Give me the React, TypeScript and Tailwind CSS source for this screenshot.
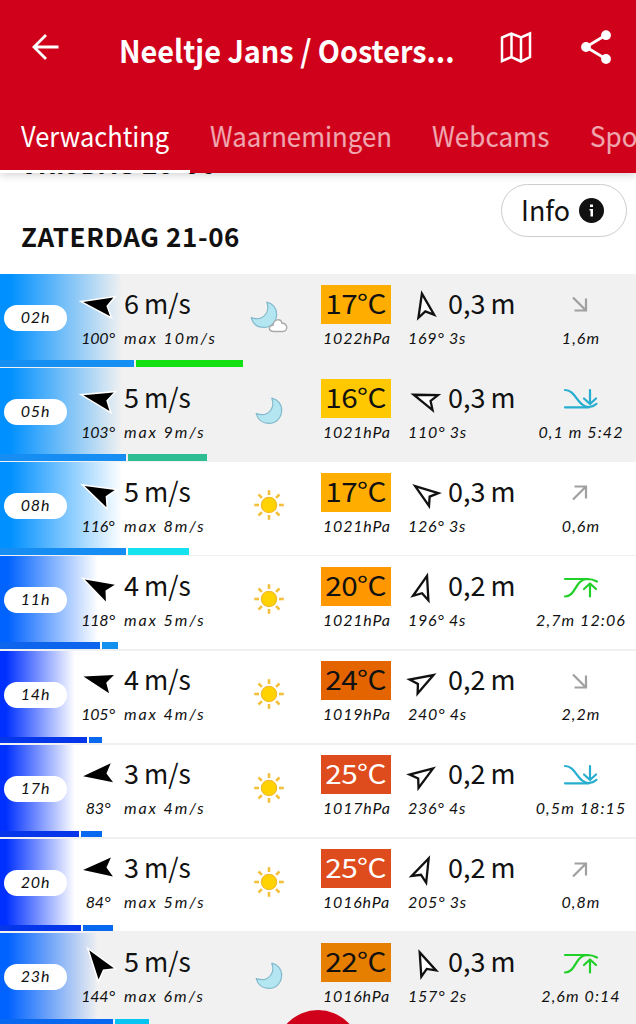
import { clsx } from "clsx"

type Weather = "moon" | "moon-cloud" | "sun"
type Tide = "falling" | "rising" | "low" | "high"

interface Forecast {
  hour: string
  night?: boolean
  glow: string
  windDir: number
  wind: number
  gust: number
  windBar: { width: number; color: string }
  gustBar: { width: number; color: string }
  weather: Weather
  temp: number
  tempColor: string
  pressure: number
  waveDir: number
  wave: string
  period: number
  tide: Tide
  tideText: string
}

const BLUE = "w-[122px] from-[#0090ff] from-8% to-[#0090ff]/0"
const MID = "w-[98px] from-[#0062ff] from-8% to-[#0062ff]/0"
const DEEP = "w-[75px] from-[#0030ff] from-8% to-[#0030ff]/0"

const forecasts: Forecast[] = [
  {
    hour: "02", night: true, glow: BLUE, windDir: 100, wind: 6, gust: 10,
    windBar: { width: 134, color: "#1590f2" }, gustBar: { width: 107, color: "#12e010" },
    weather: "moon-cloud", temp: 17, tempColor: "bg-[#ffae00]", pressure: 1022,
    waveDir: 169, wave: "0,3", period: 3, tide: "falling", tideText: "1,6m",
  },
  {
    hour: "05", night: true, glow: BLUE, windDir: 103, wind: 5, gust: 9,
    windBar: { width: 126, color: "#158df2" }, gustBar: { width: 79, color: "#2cbd92" },
    weather: "moon", temp: 16, tempColor: "bg-[#ffc800]", pressure: 1021,
    waveDir: 110, wave: "0,3", period: 3, tide: "low", tideText: "0,1 m 5:42",
  },
  {
    hour: "08", glow: BLUE, windDir: 116, wind: 5, gust: 8,
    windBar: { width: 126, color: "#158df2" }, gustBar: { width: 61, color: "#14e2ee" },
    weather: "sun", temp: 17, tempColor: "bg-[#ffae00]", pressure: 1021,
    waveDir: 126, wave: "0,3", period: 3, tide: "rising", tideText: "0,6m",
  },
  {
    hour: "11", glow: MID, windDir: 118, wind: 4, gust: 5,
    windBar: { width: 100, color: "#0d65ee" }, gustBar: { width: 16, color: "#1291ee" },
    weather: "sun", temp: 20, tempColor: "bg-[#ff9700]", pressure: 1021,
    waveDir: 196, wave: "0,2", period: 4, tide: "high", tideText: "2,7m 12:06",
  },
  {
    hour: "14", glow: DEEP, windDir: 105, wind: 4, gust: 4,
    windBar: { width: 86.5, color: "#0636ea" }, gustBar: { width: 13, color: "#0868f0" },
    weather: "sun", temp: 24, tempColor: "bg-[#e46500]", pressure: 1019,
    waveDir: 240, wave: "0,2", period: 4, tide: "falling", tideText: "2,2m",
  },
  {
    hour: "17", glow: DEEP, windDir: 83, wind: 3, gust: 4,
    windBar: { width: 79, color: "#0636ea" }, gustBar: { width: 21, color: "#0868f0" },
    weather: "sun", temp: 25, tempColor: "bg-[#de4b1d]", pressure: 1017,
    waveDir: 236, wave: "0,2", period: 4, tide: "low", tideText: "0,5m 18:15",
  },
  {
    hour: "20", glow: DEEP, windDir: 84, wind: 3, gust: 5,
    windBar: { width: 81, color: "#0636ea" }, gustBar: { width: 29.5, color: "#0868f0" },
    weather: "sun", temp: 25, tempColor: "bg-[#de4b1d]", pressure: 1016,
    waveDir: 205, wave: "0,2", period: 3, tide: "rising", tideText: "0,8m",
  },
  {
    hour: "23", night: true, glow: MID, windDir: 144, wind: 5, gust: 6,
    windBar: { width: 113, color: "#0868f0" }, gustBar: { width: 33.5, color: "#08c4f2" },
    weather: "moon", temp: 22, tempColor: "bg-[#e67e00]", pressure: 1016,
    waveDir: 157, wave: "0,3", period: 2, tide: "high", tideText: "2,6m 0:14",
  },
]

function WindArrow({ deg }: { deg: number }) {
  return (
    <svg width="46" height="39" viewBox="-23 -19.5 46 39" className="overflow-visible">
      <path
        d="M0 -15 L9.5 14 L0 8.5 L-9.5 14 Z"
        transform={`rotate(${deg + 180})`}
        fill="#000"
        stroke="#fff"
        strokeWidth="3"
        paintOrder="stroke"
      />
    </svg>
  )
}

function WaveArrow({ deg }: { deg: number }) {
  return (
    <svg width="34" height="39" viewBox="-17 -19.5 34 39" className="overflow-visible">
      <path
        d="M0 -11 L8 12 L0 7 L-8 12 Z"
        transform={`rotate(${deg + 180})`}
        fill="#fff"
        stroke="#111"
        strokeWidth="2.3"
        strokeMiterlimit="10"
      />
    </svg>
  )
}

function WeatherIcon({ type }: { type: Weather }) {
  if (type === "sun") {
    return (
      <svg width="40" height="40" viewBox="-20 -20 40 40">
        {[0, 45, 90, 135, 180, 225, 270, 315].map((a) => (
          <path key={a} d="M0 -14.8 V-10" transform={`rotate(${a})`} stroke="#f3c03c" strokeWidth="2.6" />
        ))}
        <circle r="7.7" fill="#ffd200" stroke="#f2bc30" strokeWidth="1.2" />
      </svg>
    )
  }
  const cloudy = type === "moon-cloud"
  return (
    <svg width="40" height="40" viewBox="-20 -20 40 40">
      <path
        d="M2.8 -12.8 C9 -11.5 13 -6.5 12.6 0 C12.2 7 7 12.4 0 12.4 C-6 12.4 -11 9 -12.8 2.6 C-6 5 -1 3 1.8 -1 C4.3 -4.5 4.3 -8.8 2.8 -12.8 Z"
        transform={cloudy ? "translate(-5 -2)" : undefined}
        fill="#b4e6f2"
        stroke="#82b9cc"
        strokeWidth="1.2"
        strokeLinejoin="round"
      />
      {cloudy && (
        <path
          d="M5 14.5 C-1 14.5 -1 8.3 4 8.3 C4.5 1.8 12 1 13 6.3 C19 5.8 19.3 14.5 13.8 14.5 Z"
          fill="#fff"
          stroke="#aaa"
          strokeWidth="1.4"
        />
      )}
    </svg>
  )
}

function TideIcon({ type }: { type: Tide }) {
  if (type === "low") {
    return (
      <svg width="36" height="24" viewBox="0 0 36 24" className="mt-px" fill="none" stroke="#27add0" strokeWidth="2.2" strokeLinecap="round" strokeLinejoin="round">
        <path d="M2 3 C13 3 14 19 25 20 C28.5 20 31.5 18.7 33.5 16.8" />
        <path d="M2 20.3 H26" />
        <path d="M27 3 V17 M21 11.5 L27 17 L33 11.5" />
      </svg>
    )
  }
  if (type === "high") {
    return (
      <svg width="36" height="24" viewBox="0 0 36 24" className="mt-[3px]" fill="none" stroke="#20cf28" strokeWidth="2.2" strokeLinecap="round" strokeLinejoin="round">
        <path d="M2 20.5 C13 20.5 12 3.6 24 3 C28 3 31.5 4 34 5.5" />
        <path d="M2 3 H25" />
        <path d="M27 20.5 V8 M21 13 L27 7.5 L33 13" />
      </svg>
    )
  }
  return (
    <svg width="36" height="24" viewBox="0 0 36 24" fill="none" stroke="#a0a0a0" strokeWidth="2.2">
      {type === "falling" ? (
        <path d="M10 5.5 L22.5 18 M23 6.5 V18.5 H11.5" />
      ) : (
        <path d="M10 19.5 L22.5 7 M11.5 6.5 H23 V18.5" />
      )}
    </svg>
  )
}

const big = "font-['Noto_Sans_CJK_JP',sans-serif] text-[27px] leading-[36px] h-[39px] whitespace-nowrap text-[#111]"
const small = "font-['Lato',sans-serif] italic text-[16px] leading-5 h-5 mt-[4px] whitespace-nowrap text-[#111]"

function ForecastRow({ item }: { item: Forecast }) {
  return (
    <div className={clsx("relative h-[94.15px] overflow-hidden", item.night ? "bg-[#f1f1f1]" : "bg-white")}>
      <div className={clsx("absolute left-0 top-0 h-full bg-linear-to-r/srgb", item.glow)} />
      <div className="relative flex h-[86px] pt-[10.5px]">
        <div className="ml-1 mr-2 mt-[20.5px] h-[26px] w-[63px] rounded-full bg-white text-center font-['Lato',sans-serif] text-[16px] italic leading-[23px] tracking-[0.8px] text-[#111]">
          {item.hour}h
        </div>
        <div className="flex w-[46px] flex-col items-center">
          <WindArrow deg={item.windDir} />
          <div className={clsx(small, "tracking-[-0.2px]")}>{item.windDir}°</div>
        </div>
        <div className="ml-[3px] w-[125px]">
          <div className={big}>
            {item.wind}
            <span className="ml-[5px] inline-block origin-left scale-x-97">m/s</span>
          </div>
          <div className={clsx(small, "tracking-[1.9px]")}>max {item.gust}m/s</div>
        </div>
        <div className="mt-[12.5px] h-10 w-10">
          <WeatherIcon type={item.weather} />
        </div>
        <div className="ml-[32px] w-[70px]">
          <div className={clsx(big, "text-center", item.tempColor, item.temp >= 25 && "text-white!")}>
            <span className="inline-block scale-x-110 tracking-[-0.5px]">{item.temp}°C</span>
          </div>
          <div className={clsx(small, "pl-[2px] tracking-[0.8px]")}>{item.pressure}hPa</div>
        </div>
        <div className="ml-4 w-[119px]">
          <div className="flex">
            <WaveArrow deg={item.waveDir} />
            <div className={clsx(big, "ml-[7px]")}>
              {item.wave}
              <span className="ml-[5px]">m</span>
            </div>
          </div>
          <div className={clsx(small, "pl-px tracking-[0.7px]")}>
            {item.waveDir}° {item.period}s
          </div>
        </div>
        <div className="flex w-[110px] flex-col items-center">
          <div className="flex h-[39px] items-center">
            <TideIcon type={item.tide} />
          </div>
          <div className={clsx(small, "tracking-[1.1px]")}>{item.tideText}</div>
        </div>
      </div>
      <div className="relative flex h-[6.5px] gap-[2px]">
        <div style={{ width: item.windBar.width, backgroundColor: item.windBar.color }} />
        <div style={{ width: item.gustBar.width, backgroundColor: item.gustBar.color }} />
      </div>
      <div className="relative h-[1.65px] bg-[#f1f1f1]" />
    </div>
  )
}

function Header() {
  return (
    <header className="relative z-10 flex h-[173px] flex-col bg-[#d0021b] font-['Noto_Sans_CJK_JP',sans-serif] text-white shadow-[0_2px_8px_rgba(0,0,0,0.18)]">
      <div className="flex h-[100px] items-center">
        <svg width="28" height="28" viewBox="0 0 28 28" className="mb-[6px] ml-[31px]" fill="none" stroke="currentColor" strokeWidth="2.8">
          <path d="M27.5 14 H3 M15 2 L3 14 L15 26" />
        </svg>
        <h1 className="ml-[60px] w-[337px] origin-left scale-x-93 whitespace-nowrap text-[31px] font-bold leading-[96px]">
          Neeltje Jans / Oosters...
        </h1>
        <svg width="34" height="34" viewBox="0 0 34 34" className="mb-[6px] ml-[43px]" fill="none" stroke="currentColor" strokeWidth="2.5">
          <path d="M3 7.5 L12.5 3.5 L22 7.5 L31 3.5 V27 L22 31.5 L12.5 27 L3 31 Z M12.5 3.5 V27 M22 7.5 V31.5" />
        </svg>
        <svg width="32" height="36" viewBox="0 0 32 36" className="mb-[6px] ml-[47px]" fill="currentColor">
          <path d="M26 6 L6 18 L26 30" fill="none" stroke="currentColor" strokeWidth="2.8" />
          <circle cx="26" cy="6.2" r="4.9" />
          <circle cx="6" cy="18" r="4.9" />
          <circle cx="26" cy="30" r="4.9" />
        </svg>
      </div>
      <nav className="flex h-[73px] overflow-hidden whitespace-nowrap text-[28px] leading-[70px] text-white/65">
        <div className="w-[190px] shrink-0 border-b-[3px] border-white pl-[21px] text-white">
          <span className="inline-block origin-left scale-x-91">Verwachting</span>
        </div>
        <div className="w-[222px] shrink-0 pl-5">
          <span className="inline-block origin-left scale-x-92">Waarnemingen</span>
        </div>
        <div className="w-[158px] shrink-0 pl-5">
          <span className="inline-block origin-left scale-x-93">Webcams</span>
        </div>
        <div className="shrink-0 pl-5">
          <span className="inline-block origin-left scale-x-93">Spots</span>
        </div>
      </nav>
    </header>
  )
}

export default function App() {
  return (
    <div className="relative h-[1024px] w-[636px] overflow-hidden bg-white">
      <Header />
      <div className="relative h-[101px] overflow-hidden font-['Noto_Sans_CJK_JP',sans-serif]">
        <h2 className="-mt-[22px] h-[24px] pl-[21px] text-[26px] font-bold leading-[24px] tracking-[0.6px] text-[#111]">
          VRIJDAG 20-06
        </h2>
        <div className="flex items-start justify-between pl-[21px] pr-[9px] pt-[9px]">
          <h2 className="pt-[32px] text-[26px] font-bold leading-10 tracking-[0.6px] text-[#111]">ZATERDAG 21-06</h2>
          <button className="flex h-[53px] w-[126px] items-center rounded-full border-[1.5px] border-[#ccc] bg-white pl-[19px] text-[28px] leading-[48px] text-[#111]">
            <span className="mb-1 w-[58px] origin-left scale-x-96 text-left">Info</span>
            <svg width="25" height="25" viewBox="0 0 25 25">
              <circle cx="12.5" cy="12.5" r="12.5" fill="#111" />
              <path d="M11 6.5 H14 V9 H11 Z M10.5 11 H14 V18.5 H11.5 V12.5 H10.5 Z" fill="#fff" />
            </svg>
          </button>
        </div>
      </div>
      {forecasts.map((item) => (
        <ForecastRow key={item.hour} item={item} />
      ))}
      <div className="absolute left-[276px] top-[1010px] size-[84px] rounded-full bg-[#d0021b]" />
    </div>
  )
}
